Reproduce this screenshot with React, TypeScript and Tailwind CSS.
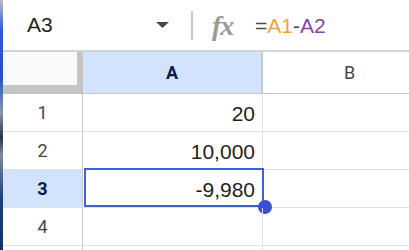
import React from "react";

const rows = [
  { n: "1", v: "20" },
  { n: "2", v: "10,000" },
  { n: "3", v: "-9,980", sel: true },
  { n: "4", v: "" },
];

export default function App() {
  return (
    <div className="w-[409px] h-[250px] flex overflow-hidden bg-white" style={{ fontFamily: "Roboto, 'Liberation Sans', Arial, sans-serif" }}>
      <div className="w-[3px] shrink-0 bg-[linear-gradient(180deg,#b8bec6_0%,#2f5bd6_12%,#1e50c8_30%,#8a96a6_45%,#2a3347_55%,#7d8aa0_62%,#1d3d7a_80%,#14306a_100%)]" />
      <div className="flex-1 flex flex-col min-w-0">
        {/* Formula bar */}
        <div className="h-[52px] shrink-0 flex items-center border-b-2 border-[#d3d3d3]">
          <div className="w-[150px] pl-[24px] text-[21px] text-[#1f1f1f]" style={{ fontFamily: "'Liberation Sans', Arial, sans-serif" }}>A3</div>
          <svg width="14" height="7" viewBox="0 0 14 7" className="ml-[3px] mt-[1px]">
            <path d="M0 0 H13 L6.5 6 Z" fill="#444746" />
          </svg>
          <div className="ml-[21px] w-[2px] h-[29px] bg-[#c7c7c7]" />
          <div className="ml-[19px] w-[26px] text-[28px] italic font-semibold text-[#9a9a9a] leading-none mt-[2px] tracking-[-1px]" style={{ fontFamily: "'Liberation Serif', 'DejaVu Serif', serif" }}>fx</div>
          <div className="ml-[17px] text-[21px] leading-none" style={{ fontFamily: "'Liberation Sans', Arial, sans-serif" }}>
            <span className="text-[#444746]">=</span>
            <span className="text-[#f5a33a]">A1</span>
            <span className="text-[#444746]">-</span>
            <span className="text-[#8e3fb0]">A2</span>
          </div>
        </div>
        {/* Column header row */}
        <div className="h-[42px] shrink-0 flex">
          <div className="w-[80px] h-[42px] bg-[#c4c4c4] shrink-0">
            <div className="w-[74px] h-[33px] bg-[#f8f9fa]" />
          </div>
          <div className="w-[180px] shrink-0 bg-[#d3e3fd] border-r-2 border-b border-[#c7c7c7] flex items-center justify-center text-[18px] font-bold text-[#041e49]">
            A
          </div>
          <div className="flex-1 border-b border-[#c7c7c7] flex items-center pl-[81px] text-[18px] text-[#444746]">
            B
          </div>
        </div>
        {/* Rows */}
        {rows.map((r) => (
          <div key={r.n} className="h-[38px] shrink-0 flex border-b border-[#e1e1e1]">
            <div className={`w-[80px] shrink-0 border-r border-[#c7c7c7] flex items-center justify-center text-[18px] ${r.sel ? "bg-[#d3e3fd] font-bold text-[#041e49]" : "text-[#444746]"}`}>
              {r.n}
            </div>
            <div className="relative w-[180px] shrink-0 border-r border-[#e1e1e1] flex items-center justify-end pr-[7px] pt-[2px] text-[21px] text-[#1f1f1f]" style={{ fontFamily: "'Liberation Sans', Arial, sans-serif" }}>
              {r.v}
              {r.sel && (
                <>
                  <div className="absolute left-[1px] top-[-2px] w-[180px] h-[39px] border-2 border-[#3b63d6]" />
                  <div className="absolute left-[175px] top-[30px] w-[14px] h-[14px] rounded-full bg-[#3b4fd3]" />
                </>
              )}
            </div>
            <div className="flex-1" />
          </div>
        ))}
        <div className="flex-1 flex">
          <div className="w-[80px] shrink-0 border-r border-[#c7c7c7]" />
          <div className="w-[180px] shrink-0 border-r border-[#e1e1e1]" />
        </div>
      </div>
    </div>
  );
}
